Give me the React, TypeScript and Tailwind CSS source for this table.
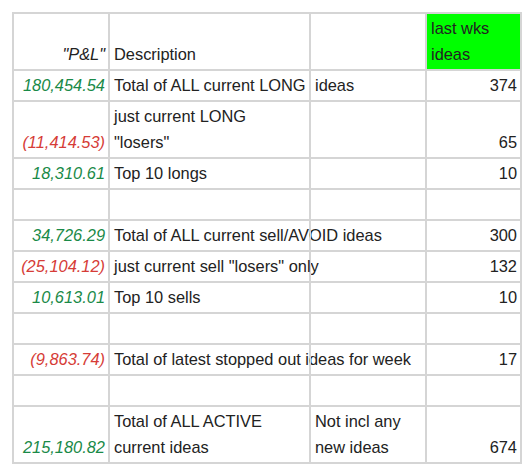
import React from "react";

type Cell = {
  t?: React.ReactNode;
  kind?: "pos" | "neg" | "num" | "text" | "hdr" | "green";
};

const G = "pos";
const R = "neg";

const rows: Cell[][] = [
  [
    { t: '"P&L"', kind: "hdr" },
    { t: "Description", kind: "text" },
    { t: "", kind: "text" },
    { t: <>last wks<br />ideas</>, kind: "green" },
  ],
  [
    { t: "180,454.54", kind: G },
    { t: "Total of ALL current LONG", kind: "text" },
    { t: "ideas", kind: "text" },
    { t: "374", kind: "num" },
  ],
  [
    { t: "(11,414.53)", kind: R },
    { t: <>just current LONG<br />"losers"</>, kind: "text" },
    { t: "", kind: "text" },
    { t: "65", kind: "num" },
  ],
  [
    { t: "18,310.61", kind: G },
    { t: "Top 10 longs", kind: "text" },
    { t: "", kind: "text" },
    { t: "10", kind: "num" },
  ],
  [{ t: "" }, { t: "" }, { t: "" }, { t: "" }],
  [
    { t: "34,726.29", kind: G },
    { t: "Total of ALL current sell/AVOID ideas", kind: "text" },
    { t: "", kind: "text" },
    { t: "300", kind: "num" },
  ],
  [
    { t: "(25,104.12)", kind: R },
    { t: 'just current sell "losers" only', kind: "text" },
    { t: "", kind: "text" },
    { t: "132", kind: "num" },
  ],
  [
    { t: "10,613.01", kind: G },
    { t: "Top 10 sells", kind: "text" },
    { t: "", kind: "text" },
    { t: "10", kind: "num" },
  ],
  [{ t: "" }, { t: "" }, { t: "" }, { t: "" }],
  [
    { t: "(9,863.74)", kind: R },
    { t: "Total of latest stopped out ideas for week", kind: "text" },
    { t: "", kind: "text" },
    { t: "17", kind: "num" },
  ],
  [{ t: "" }, { t: "" }, { t: "" }, { t: "" }],
  [
    { t: "215,180.82", kind: G },
    { t: <>Total of ALL ACTIVE<br />current ideas</>, kind: "text" },
    { t: <>Not incl any<br />new ideas</>, kind: "text" },
    { t: "674", kind: "num" },
  ],
];

function cellClass(kind?: Cell["kind"]) {
  switch (kind) {
    case "pos":
      return "text-right italic text-[#1a8a48]";
    case "neg":
      return "text-right italic text-[#d63c37]";
    case "hdr":
      return "text-right italic text-[#222]";
    case "num":
      return "text-right text-[#222]";
    case "green":
      return "text-left text-[#222] bg-[#00ff00]";
    default:
      return "text-left text-[#222]";
  }
}

export default function App() {
  return (
    <div className="min-h-[476px] w-[525px] bg-white pl-[12px] pt-[12px] font-['Liberation_Sans',Arial,sans-serif] text-[16.4px]">
      <div className="w-fit border border-[#d5d5d5]">
        <div className="grid grid-cols-[96px_201px_116px_95px]">
          {rows.map((row, ri) =>
            row.map((c, ci) => (
              <div
                key={`${ri}-${ci}`}
                className={`relative flex flex-col justify-end whitespace-nowrap border border-[#d5d5d5] pl-[4px] pr-[3px] pt-[1px] pb-[2px] leading-[26px] min-h-[31px] ${cellClass(
                  c.kind
                )}`}
              >
                <div>{c.t === "" ? "\u00a0" : c.t}</div>
              </div>
            ))
          )}
        </div>
      </div>
    </div>
  );
}
